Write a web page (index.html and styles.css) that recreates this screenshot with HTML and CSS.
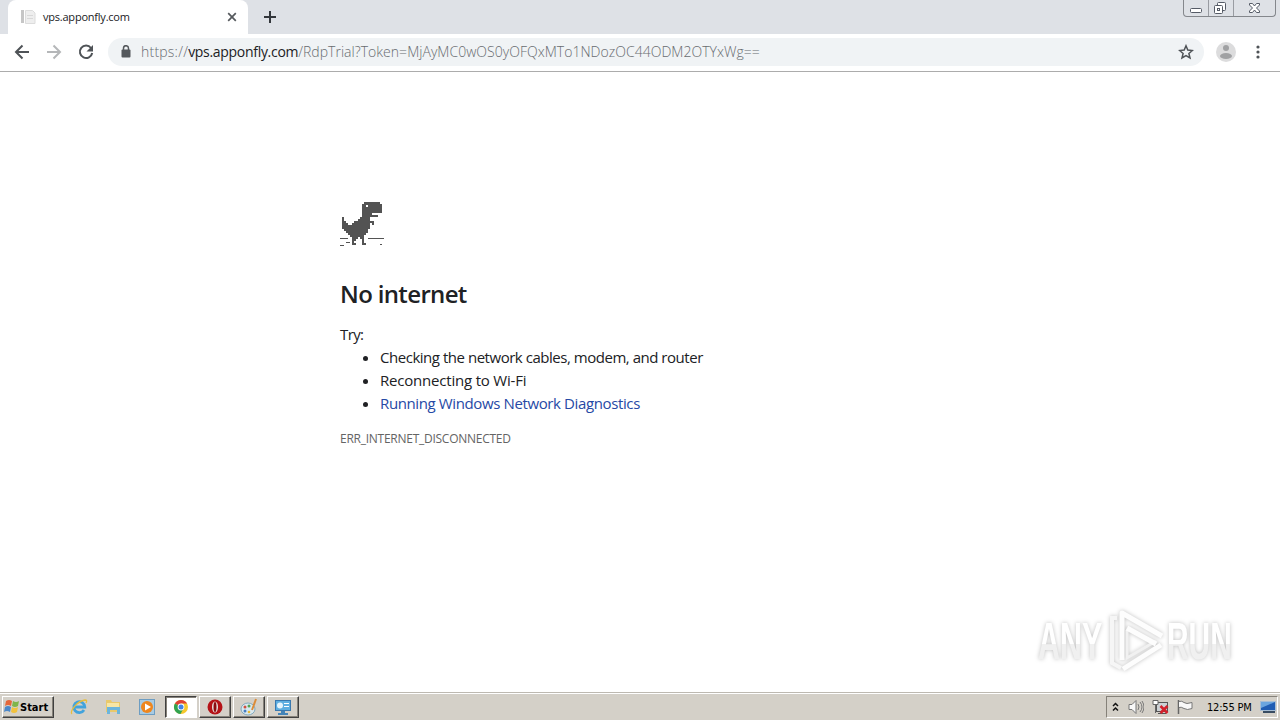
FILE: index.html
```
<!DOCTYPE html>
<html lang="en">
<head>
    <meta charset="UTF-8">
    <title>vps.apponfly.com</title>
    <link rel="stylesheet" href="styles.css">
</head>
<body>

    <div class="tabstrip">
        <div class="tab">
            <svg class="favicon" width="16" height="16" viewBox="0 0 16 16"><path fill="#c6c6c6" d="M1 1h3v13H1z"/><path fill="#eee" stroke="#dcdcdc" d="M5.500 1.500h7l2.500 2.500v10.500h-9.500z"/><path stroke="#d8d8d8" d="M7 6.500h6M7 9.500h6"/></svg>
            <span class="tab-title">vps.apponfly.com</span>
            <svg class="tab-close" width="10" height="10" viewBox="0 0 10 10"><path d="M1.200 1.200l7.600 7.600M8.800 1.200L1.200 8.800" stroke="#55595d" stroke-width="1.700"/></svg>
        </div>
        <svg class="new-tab" width="12" height="12" viewBox="0 0 12 12"><path d="M6 0v12M0 6h12" stroke="#33373c" stroke-width="2"/></svg>
        <div class="window-buttons">
            <div class="wbtn"><svg width="24" height="16" viewBox="0 0 24 16"><rect x="6.500" y="8.500" width="11" height="4" rx="1" fill="#fff" stroke="#555b66"/></svg></div>
            <div class="wbtn"><svg width="24" height="16" viewBox="0 0 24 16"><g fill="#fff" stroke="#555b66"><rect x="8.500" y="2.500" width="8" height="8" rx="1"/><rect x="5.500" y="5.500" width="8" height="8" rx="1"/><rect x="8.500" y="8.500" width="2" height="2"/></g></svg></div>
            <div class="wbtn wide"><svg width="41" height="16" viewBox="0 0 41 16"><path d="M15.500 3.500h3l2 2.500 2-2.500h3v1.500L22.500 8l3 3v1.500h-3l-2-2.500-2 2.500h-3V11l3-3-3-3z" fill="#fff" stroke="#555b66"/></svg></div>
        </div>
    </div>

    <div class="toolbar">
        <svg class="nav" width="16" height="16" viewBox="0 0 16 16"><path d="M15 8H2M8.500 1.500L2 8l6.500 6.500" fill="none" stroke="#4f5357" stroke-width="2"/></svg>
        <svg class="nav" width="16" height="16" viewBox="0 0 16 16"><path d="M1 8h13M7.500 1.500L14 8l-6.500 6.500" fill="none" stroke="#b5b7b9" stroke-width="2"/></svg>
        <svg class="nav" width="16" height="16" viewBox="0 0 16 16"><path d="M13 4A6.200 6.200 0 1 0 14.200 9" fill="none" stroke="#4f5357" stroke-width="2"/><path d="M15 1v6.500H8.500z" fill="#4f5357"/></svg>
        <div class="omnibox">
            <svg class="lock" width="10" height="13" viewBox="0 0 10 13"><rect x="0.500" y="4.500" width="9" height="8" rx="1" fill="#54585c"/><path d="M2.500 5V3.200a2.500 2.500 0 0 1 5 0V5" fill="none" stroke="#54585c" stroke-width="1.500"/></svg>
            <div class="url"><span class="scheme">https://</span><span class="host">vps.apponfly.com</span><span class="path">/RdpTrial?Token=MjAyMC0wOS0yOFQxMTo1NDozOC44ODM2OTYxWg==</span></div>
            <svg class="star" width="16" height="16" viewBox="0 0 16 16"><path d="M8 1.800l1.800 4.300 4.600.4-3.500 3 1.100 4.500L8 11.600 4 14l1.100-4.500-3.500-3 4.600-.4z" fill="none" stroke="#4f5357" stroke-width="1.500"/></svg>
        </div>
        <svg class="avatar" width="20" height="20" viewBox="0 0 20 20"><circle cx="10" cy="10" r="10" fill="#dcdcdd"/><circle cx="10" cy="6" r="3" fill="#a0a1a3"/><ellipse cx="10" cy="14" rx="6" ry="3" fill="#a0a1a3"/></svg>
        <svg class="menu" width="4" height="14" viewBox="0 0 4 14"><g fill="#4f5357"><circle cx="2" cy="2" r="1.600"/><circle cx="2" cy="7" r="1.600"/><circle cx="2" cy="12" r="1.600"/></g></svg>
    </div>

    <div class="content">
        <!-- dino, one run per pixel row -->
        <svg class="dino" width="44" height="46" viewBox="0 0 44 46" shape-rendering="crispEdges">
            <g fill="#535353">
                <path d="M24 0h16v2H24zM22 2h20v9H22zM22 11h10v2H22zM22 13h16v2H22z"/>
                <path d="M2 15h2v4H2zM20 15h10v2H20zM18 17h12v2H18zM2 19h4v2H2zM14 19h20v2H14zM2 21h6v2H2zM12 21h18v2H12zM32 21h2v2h-2z"/>
                <path d="M2 23h28v4H2zM4 27h24v2H4zM6 29h22v2H6zM8 31h18v2H8zM10 33h14v2H10z"/>
                <path d="M12 35h6v2h-6zM12 37h4v2h-4zM12 39h2v2h-2zM12 41h4v2h-4zM20 35h4v2h-4zM22 37h2v4h-2zM22 41h4v2h-4z"/>
                <path d="M0 36h8v1H0zM28 36h16v1H28zM6 40h4v1H6zM0 43h4v1H0zM40 42h2v1h-2z"/>
            </g>
            <path fill="#fff" d="M26 3h2v2h-2z"/>
        </svg>
        <h1>No internet</h1>
        <p class="try">Try:</p>
        <ul>
            <li><span class="tip1">Checking the network cables, modem, and router</span></li>
            <li><span class="tip2">Reconnecting to Wi-Fi</span></li>
            <li><a class="tip3">Running Windows Network Diagnostics</a></li>
        </ul>
        <div class="error-code">ERR_INTERNET_DISCONNECTED</div>
    </div>

    <svg class="watermark" width="230" height="80" viewBox="0 0 230 80">
        <defs>
            <linearGradient id="fade" x1="0" y1="0" x2="0" y2="1">
                <stop offset="0.550" stop-color="#fff"/>
                <stop offset="0.550" stop-color="#f0f0f0"/>
            </linearGradient>
        </defs>
        <g class="mark">
            <g class="mark-text" fill="url(#fade)">
                <text transform="translate(8 55) scale(0.585 1)">ANY</text>
                <text transform="translate(137 55) scale(0.575 1)">RUN</text>
            </g>
            <path d="M87 14h-5v45l9 5" fill="none" stroke="#f6f6f6" stroke-width="4"/>
            <path d="M97 26v28l29-17" fill="none" stroke="#f1f1f1" stroke-width="3"/>
            <path d="M92 56V9l40 23M97 24l29 16M93 65l38-24" fill="none" stroke="#fdfdfd" stroke-width="5" stroke-linejoin="round"/>
        </g>
    </svg>

    <div class="taskbar">
        <div class="start">
            <svg width="17" height="16" viewBox="0 0 17 16"><path fill="#e5673a" d="M3 2q3-2 6 0L8 7q-3-2-6 0z"/><path fill="#7fb54a" d="M10 2q3 2 6 0l-1 5q-3 2-6 0z"/><path fill="#4c88c9" d="M2 8q3-2 6 0l-1 5q-3-2-6 0z"/><path fill="#f2c23d" d="M9 8q3 2 6 0l-1 5q-3 2-6 0z"/></svg>
            <span>Start</span>
        </div>
        <div class="quick">
            <svg width="18" height="18" viewBox="0 0 18 18"><path d="M14 12A5.500 5.500 0 1 1 14.800 9H5" fill="none" stroke="#42a3dc" stroke-width="2.800"/><path d="M2 16c-3-2 5-13 13-14 2 0 2 1 1 3" fill="none" stroke="#e8bd3b" stroke-width="1.300"/></svg>
            <svg width="18" height="18" viewBox="0 0 18 18"><path fill="#e9c96c" d="M2 2h5l1 2h8v10H2z"/><path fill="#f7e6a5" d="M3 5h12v6H3z"/><path fill="#6cb5dc" d="M3 9h13v7h-3v-4H6v4H3z"/></svg>
            <svg width="18" height="18" viewBox="0 0 18 18"><rect x="1.500" y="1.500" width="15" height="15" fill="#a8cbe3" stroke="#6d9dc2"/><circle cx="9" cy="9" r="6" fill="#ee861e"/><path fill="#fff" d="M7 5.500l6 3.500-6 3.500z"/></svg>
        </div>
        <div class="tasks">
            <div class="task active"><svg width="16" height="16" viewBox="0 0 16 16"><circle cx="8" cy="8" r="7" fill="#f6c82d"/><path fill="#df4034" d="M8 8L1.900 4.500A7 7 0 0 1 14.100 4.500H8z"/><path fill="#31a350" d="M8 8v0L1.900 4.500A7 7 0 0 0 7.500 15l3-5.500z"/><circle cx="8" cy="8" r="3.400" fill="#fff"/><circle cx="8" cy="8" r="2.500" fill="#4182e4"/></svg></div>
            <div class="task"><svg width="16" height="16" viewBox="0 0 16 16"><circle cx="8" cy="8" r="7.500" fill="#b51216"/><ellipse cx="8" cy="8" rx="3" ry="5.500" fill="#e8e4e0"/><ellipse cx="8" cy="8" rx="1.500" ry="5" fill="#8c0c10"/></svg></div>
            <div class="task"><svg width="18" height="18" viewBox="0 0 18 18"><ellipse cx="8" cy="11" rx="7" ry="6" fill="#d9e8ef" stroke="#82a9bd"/><circle cx="5" cy="9" r="1.500" fill="#cf5040"/><circle cx="9" cy="8" r="1.500" fill="#55a355"/><circle cx="5" cy="13" r="1.500" fill="#467ec2"/><circle cx="9" cy="14" r="1.300" fill="#e5b838"/><path d="M16 1l-4 11" stroke="#db8b38" stroke-width="2"/></svg></div>
            <div class="task"><svg width="18" height="18" viewBox="0 0 18 18"><rect x="1.500" y="2.500" width="15" height="10" fill="#5eaee0" stroke="#3978af"/><circle cx="6" cy="7.500" r="3" fill="#e6f4fc"/><path fill="none" stroke="#fff" d="M10 5.500h5M10 8.500h5"/><path fill="#4283b8" d="M7 13h4v2h3v2H4v-2h3z"/></svg></div>
        </div>
        <div class="tray">
            <svg class="chevrons" width="7" height="10" viewBox="0 0 7 10"><path d="M1 4l2.500-2.500L6 4M1 8.500L3.500 6 6 8.500" fill="none" stroke="#111" stroke-width="1.500"/></svg>
            <svg width="17" height="16" viewBox="0 0 17 16"><path d="M2 5.500h3l4-4v13l-4-4H2z" fill="#f8f8f8" stroke="#777"/><path d="M11 5q2 3 0 6M13 3q4 5 0 10M15 2q4 6 0 12" fill="none" stroke="#777"/></svg>
            <svg width="17" height="16" viewBox="0 0 17 16"><rect x="4.500" y="3.500" width="11" height="9" fill="#ccd2d5" stroke="#555"/><path d="M6 14.500h8" stroke="#555"/><path d="M1 1.500h5v4H1zM3.500 5v9" fill="#fff" stroke="#666"/><path d="M8.500 7l7 7M15.500 7l-7 7" stroke="#d3202b" stroke-width="2.600"/></svg>
            <svg width="17" height="16" viewBox="0 0 17 16"><path d="M1.500 1v14" stroke="#666" stroke-width="1.500"/><path d="M2 2.500q3-1 5 1t8 0v6q-5 2-8 0t-5-1" fill="#f8f8f8" stroke="#777"/></svg>
            <span class="clock">12:55 PM</span>
            <svg class="desktop" width="17" height="14" viewBox="0 0 17 14"><path fill="#205db3" stroke="#a6bdd4" d="M.5 1.500h15v9H.5z"/><path fill="#6aa5df" d="M1 2h14L1 8z"/><path fill="#384c62" d="M3 11h12v2H3z"/></svg>
        </div>
    </div>

</body>
</html>
```

FILE: styles.css
```
* { box-sizing: border-box; }
body { margin: 0; width: 1280px; height: 720px; overflow: hidden; display: flex; flex-direction: column; background: #fff; font-family: "Open Sans", "Noto Sans", sans-serif; color: #202124; }
svg { display: block; flex: none; }

.tabstrip { height: 34px; background: #dee1e6; display: flex; align-items: flex-start; padding-left: 8px; flex: none; }
.tab { width: 240px; height: 34px; background: #fff; border-radius: 8px 8px 0 0; display: flex; align-items: center; padding: 0 11px 0 12px; }
.tab-title { flex: 1; margin: -2px 0 0 7px; font: 11px "Open Sans", sans-serif; letter-spacing: -0.22px; white-space: nowrap; }
.new-tab { margin: 11px 0 0 16px; }
.window-buttons { margin-left: auto; margin-right: 4px; height: 17px; display: flex; border: 1px solid #84878c; border-top: 0; border-radius: 0 0 4px 4px; }
.wbtn { width: 25px; border-right: 1px solid #999ca2; }
.wbtn.wide { width: 41px; border-right: 0; }

.toolbar { height: 38px; flex: none; display: flex; align-items: center; padding: 0 20px 2px 14px; border-bottom: 1px solid #acacac; }
.nav { margin-right: 16px; }
.omnibox { width: 1096px; height: 28px; margin-left: -2px; border-radius: 14px; background: #f0f3f5; display: flex; align-items: center; padding: 0 10px 0 13px; }
.url { flex: 1; margin-left: 10px; font-size: 14px; font-weight: 300; white-space: nowrap; color: #686c70; display: flex; }
.scheme { letter-spacing: 0.22px; }
.host { color: #202124; font-weight: 400; letter-spacing: -0.3px; }
.path { letter-spacing: 0.03px; }
.avatar { margin-left: 12px; }
.menu { margin-left: 20px; }

.content { flex: 1; padding: 130px 0 0 340px; }
h1 { margin: 30px 0 0; font-size: 24px; line-height: 32px; font-weight: 600; letter-spacing: -0.65px; }
.try { margin: 13px 0 0; font-size: 15px; line-height: 23px; letter-spacing: -0.6px; }
ul { margin: 0; padding-left: 40px; font-size: 15px; line-height: 23px; }
a { color: #2649a5; }
.error-code { margin-top: 15px; font-size: 12px; line-height: 18px; color: #646464; white-space: nowrap; letter-spacing: -0.26px; }
.tip1 { letter-spacing: -0.47px; }
.tip2 { letter-spacing: -0.2px; }
.tip3 { letter-spacing: -0.38px; }

.watermark { position: absolute; left: 1030px; top: 604px; }
.mark { filter: drop-shadow(0 0 2px rgba(0, 0, 0, 0.25)); }
.mark-text { font: bold 52px "Liberation Sans", sans-serif; }

.taskbar { height: 28px; flex: none; background: #d4d0c8; border-top: 1px solid #bdb9b1; box-shadow: inset 0 1px #fff; display: flex; align-items: center; padding: 1px 2px 0 2px; font-family: "DejaVu Sans Condensed", "DejaVu Sans", sans-serif; }
.start, .task { border: 1px solid; border-color: #fff #404040 #404040 #fff; box-shadow: inset -1px -1px #858179; height: 22px; display: flex; align-items: center; }
.start { width: 52px; font-size: 11px; font-weight: bold; color: #000; padding-left: 0; }
.quick { display: flex; gap: 16px; margin-left: 16px; }
.tasks { display: flex; gap: 2px; margin-left: 9px; }
.task { width: 32px; justify-content: center; }
.task.active { background: #fff; border-color: #404040 #fff #fff #404040; box-shadow: inset 1px 1px #858179; }
.tray { margin-left: auto; width: 172px; height: 22px; border: 1px solid; border-color: #858179 #fff #fff #858179; display: flex; align-items: center; padding-left: 5px; gap: 8px; }
.clock { margin-left: 5px; width: 46px; font-size: 11px; letter-spacing: -0.2px; white-space: nowrap; color: #000; }
```
